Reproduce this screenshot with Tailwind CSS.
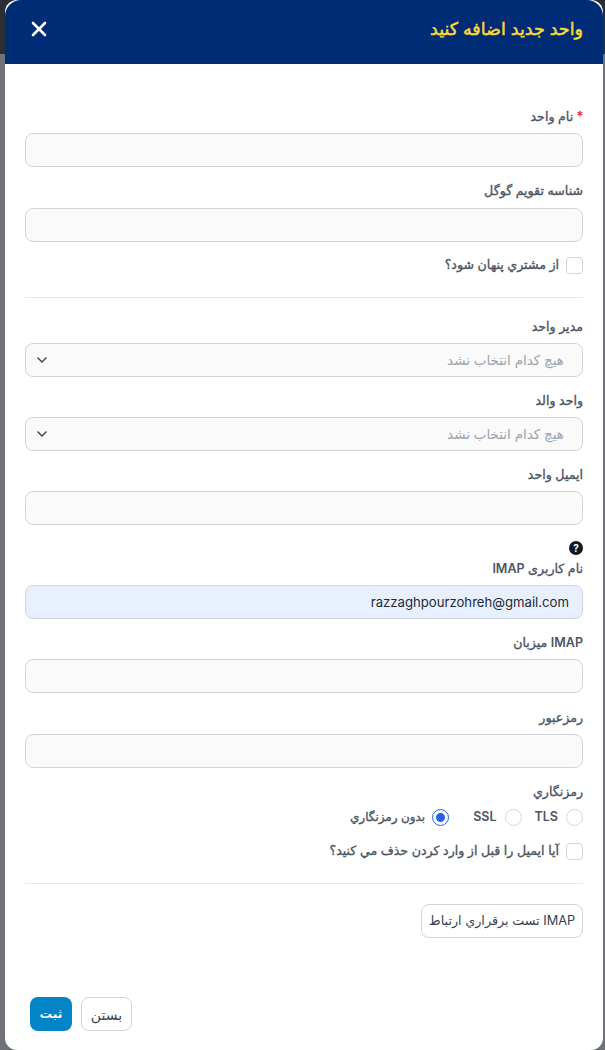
<!DOCTYPE html>
<html lang="fa" dir="rtl">
<head>
    <meta charset="UTF-8">
    <title>واحد جديد</title>
    <script src="https://cdn.jsdelivr.net/npm/@tailwindcss/browser@4"></script>
</head>
<body class="h-[1050px] overflow-hidden bg-[linear-gradient(#2a2e35_54px,#6f7279_54px)] font-['Inter','DejaVu_Sans',sans-serif]">
    <div class="mr-[2px] ml-[5px] h-[1050px] bg-white rounded-[12px] flex flex-col">
        <header class="bg-[#002c76] h-[64px] shrink-0 rounded-t-[16px] flex items-center justify-between pr-[20px] pl-[26px] pb-[6px]">
            <h1 class="text-[#fdd835] text-[17.5px] [-webkit-text-stroke:0.5px]">واحد جدید اضافه کنید</h1>
            <svg class="w-[16px] h-[16px]" viewBox="0 0 16 16" fill="none" stroke="white" stroke-width="2.6" stroke-linecap="round"><path d="M2 2l12 12M14 2L2 14"/></svg>
        </header>
        <form class="pr-[20px] pl-[20px] pt-[44px] text-[#4b5563]">
            <label class="block h-[17px] text-[12.6px] leading-[17px] [-webkit-text-stroke:0.35px] mb-[8px]"><span class="text-red-500">*</span> نام واحد</label>
            <input class="block w-full h-[34px] rounded-[8px] border border-[#d1d5db] bg-[#fafafa]">
            <label class="block h-[17px] text-[12.6px] leading-[17px] [-webkit-text-stroke:0.35px] mt-[15px] mb-[9px]">شناسه تقویم گوگل</label>
            <input class="block w-full h-[34px] rounded-[8px] border border-[#d1d5db] bg-[#fafafa]">
            <div class="flex items-center gap-[7px] mt-[14px] h-[18px]">
                <span class="w-[17px] h-[17px] rounded-[4px] border border-[#d1d5db]"></span>
                <span class="text-[12.6px] [-webkit-text-stroke:0.35px]">از مشتري پنهان شود؟</span>
            </div>
            <hr class="border-[#e5e7eb] mt-[23px]">
            <label class="block h-[17px] text-[12.6px] leading-[17px] [-webkit-text-stroke:0.35px] mt-[20px] mb-[8px]">مدیر واحد</label>
            <div class="flex items-center justify-between h-[34px] rounded-[8px] border border-[#d1d5db] bg-[#fafafa] pr-[18px] pl-[10px]">
                <span class="text-[13.5px] text-[#9ca3af]">هیچ کدام انتخاب نشد</span>
                <svg class="w-[12px] h-[8px]" viewBox="0 0 12 8" fill="none" stroke="#374151" stroke-width="1.4"><path d="M1.5 1.5L6 6l4.5-4.5"/></svg>
            </div>
            <label class="block h-[17px] text-[12.6px] leading-[17px] [-webkit-text-stroke:0.35px] mt-[15px] mb-[8px]">واحد والد</label>
            <div class="flex items-center justify-between h-[34px] rounded-[8px] border border-[#d1d5db] bg-[#fafafa] pr-[18px] pl-[10px]">
                <span class="text-[13.5px] text-[#9ca3af]">هیچ کدام انتخاب نشد</span>
                <svg class="w-[12px] h-[8px]" viewBox="0 0 12 8" fill="none" stroke="#374151" stroke-width="1.4"><path d="M1.5 1.5L6 6l4.5-4.5"/></svg>
            </div>
            <label class="block h-[17px] text-[12.6px] leading-[17px] [-webkit-text-stroke:0.35px] mt-[15px] mb-[8px]">ایمیل واحد</label>
            <input class="block w-full h-[34px] rounded-[8px] border border-[#d1d5db] bg-[#fafafa]">
            <div class="w-[14px] h-[14px] rounded-full bg-[#111827] text-white text-[10px] font-bold leading-[14px] text-center mt-[16px]">?</div>
            <label class="block h-[17px] text-[12.6px] leading-[17px] [-webkit-text-stroke:0.35px] mt-[5px] mb-[8px]">نام کاربری <span class="text-[12.5px] font-semibold [-webkit-text-stroke:0]">IMAP</span></label>
            <input class="block w-full h-[34px] rounded-[8px] border border-[#d1d5db] bg-[#e8f0fe] pr-[13px] pl-[12px] text-[13.15px] text-[#1f2937]" dir="rtl" value="razzaghpourzohreh@gmail.com">
            <label class="block h-[17px] text-[12.6px] leading-[17px] [-webkit-text-stroke:0.35px] mt-[15px] mb-[8px]"><span class="text-[12.5px] font-semibold [-webkit-text-stroke:0]">IMAP</span> میزبان</label>
            <input class="block w-full h-[34px] rounded-[8px] border border-[#d1d5db] bg-[#fafafa]">
            <label class="block h-[17px] text-[12.6px] leading-[17px] [-webkit-text-stroke:0.35px] mt-[16px] mb-[8px]">رمزعبور</label>
            <input class="block w-full h-[34px] rounded-[8px] border border-[#d1d5db] bg-[#fafafa]">
            <label class="block h-[17px] text-[12.6px] leading-[17px] [-webkit-text-stroke:0.35px] mt-[15px] mb-[8px]">رمزنگاري</label>
            <div class="flex items-center h-[18px] text-[12.5px] font-semibold">
                <span class="w-[17px] h-[17px] rounded-full border border-[#d1d5db]"></span>
                <span class="mr-[8px]">TLS</span>
                <span class="w-[17px] h-[17px] rounded-full border border-[#d1d5db] mr-[13px]"></span>
                <span class="mr-[8px]">SSL</span>
                <span class="w-[15px] h-[15px] rounded-full bg-[#2563eb] border-[3px] border-white outline outline-[#2563eb] mr-[25px]"></span>
                <span class="mr-[8px] text-[12px] font-normal [-webkit-text-stroke:0.35px]">بدون رمزنگاري</span>
            </div>
            <div class="flex items-center gap-[7px] mt-[16px] h-[18px]">
                <span class="w-[17px] h-[17px] rounded-[4px] border border-[#d1d5db]"></span>
                <span class="text-[12.6px] [-webkit-text-stroke:0.35px]">آیا ایمیل را قبل از وارد کردن حذف مي کنید؟</span>
            </div>
            <hr class="border-[#e5e7eb] mt-[23px]">
            <button type="button" class="block mt-[20px] h-[34px] w-[162px] rounded-[8px] border border-[#d1d5db] bg-white text-[12.75px] text-[#374151]">IMAP تست برقراري ارتباط</button>
            <div class="flex justify-end gap-[9px] mt-[59px] pl-[5px]">
                <button type="button" class="h-[34px] w-[51px] rounded-[8px] border border-[#d1d5db] bg-white text-[14px] text-[#374151]">بستن</button>
                <button type="button" class="h-[34px] w-[42px] rounded-[8px] bg-[#0284c7] text-[12.5px] font-bold text-white">ثبت</button>
            </div>
        </form>
    </div>
</body>
</html>
